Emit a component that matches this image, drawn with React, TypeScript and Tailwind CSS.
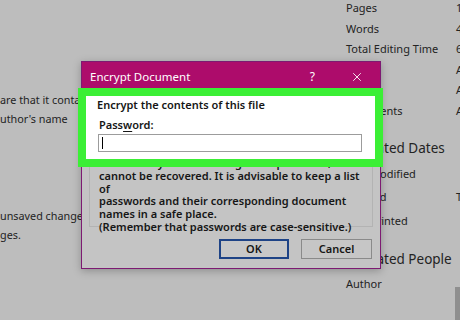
import React from "react";
import { X } from "lucide-react";

export default function App() {
  return (
    <div
      className="relative w-[460px] h-[320px] overflow-hidden bg-[#bdbdbd] text-[#232323]"
      style={{ fontFamily: '"Noto Sans", "Open Sans", sans-serif' }}
    >
      {/* background Word info page */}
      <div className="flex h-full">
        <div className="w-[346px] shrink-0 text-[10.8px] leading-[19px]">
          <div className="pt-[90px]">are that it contains hidden properties and</div>
          <div>uthor's name</div>
          <div className="pt-[78px]">unsaved changes that you have made</div>
          <div>ges.</div>
        </div>
        <div className="flex-1 relative text-[11px]">
          <div className="flex flex-col leading-[20.6px] -mt-[2px]">
            <div>Pages</div>
            <div>Words</div>
            <div>Total Editing Time</div>
            <div>Title</div>
            <div>Tags</div>
            <div>Comments</div>
          </div>
          <div className="ml-[11px] mt-[14px] text-[13.5px] leading-[24px]">Related Dates</div>
          <div className="flex flex-col leading-[23.5px] mt-[2px]">
            <div>Last Modified</div>
            <div>Created</div>
            <div>Last Printed</div>
          </div>
          <div className="ml-[11px] mt-[15px] text-[13.5px] leading-[24px]">Related People</div>
          <div className="mt-[3px] leading-[20px]">Author</div>
          <div className="absolute left-[110px] top-0 flex flex-col leading-[20.6px] -mt-[2px]">
            <div>1</div>
            <div>4</div>
            <div>6</div>
            <div>A</div>
            <div>A</div>
            <div>A</div>
          </div>
          <div className="absolute left-[110px] top-[187px] leading-[20px]">T</div>
          <div className="absolute left-[109px] top-[287px] w-[20px] h-[40px] bg-[#8f8f8f]" />
        </div>
      </div>

      {/* dialog */}
      <div className="absolute left-[81px] top-[61px] w-[300px] h-[208px] border border-[#7d1a72] bg-[#c4c4c4] shadow-[0_2px_8px_rgba(0,0,0,0.25)] flex flex-col">
        <div className="h-[26px] bg-[#ad0c6b] flex items-center pl-[8px] pr-[16px] pt-[4px] text-white">
          <span className="text-[11.5px]">Encrypt Document</span>
          <span className="ml-auto text-[12px] mr-[35px]">?</span>
          <X size={14} strokeWidth={1.5} />
        </div>
        <div className="flex-1 flex flex-col px-[7px]">
          <div className="h-[139px] border border-[#b3b3b3] border-t-0 pl-[9px] pt-[69px] text-[11px] leading-[12.75px] text-[#161616] font-semibold">
            <div>Caution: If you lose or forget the password, it</div>
            <div>cannot be recovered. It is advisable to keep a list of</div>
            <div>passwords and their corresponding document</div>
            <div>names in a safe place.</div>
            <div>(Remember that passwords are case-sensitive.)</div>
          </div>
          <div className="mt-[12px] flex justify-end gap-[12px] pr-[1px] text-[11px] text-[#161616] font-semibold">
            <div className="w-[70px] h-[20px] border-2 border-[#1e4386] bg-[#c8c8c8] flex items-center justify-center">OK</div>
            <div className="w-[71px] h-[20px] border border-[#8a8a8a] bg-[#c6c6c6] flex items-center justify-center">Cancel</div>
          </div>
        </div>
      </div>

      {/* green highlight */}
      <div className="absolute left-[78px] top-[88px] w-[305px] h-[79px] border-[8px] border-[#3bef35] bg-white overflow-hidden text-[11px] text-[#161616] font-semibold">
        <div className="pl-[11px] pt-[2px] leading-[14px]">Encrypt the contents of this file</div>
        <div className="pl-[13px] mt-[6px] leading-[14px]">
          Pass<span className="underline underline-offset-2">w</span>ord:
        </div>
        <div className="ml-[12px] mt-[2px] w-[264px] h-[18px] border border-[#9c9c9c] bg-white flex items-center pl-[3px]">
          <div className="w-[1px] h-[12px] bg-black" />
        </div>
        <div className="pl-[13px] mt-[4px] leading-[13px]">Caution: If you lose or forget the password, it</div>
      </div>
    </div>
  );
}
